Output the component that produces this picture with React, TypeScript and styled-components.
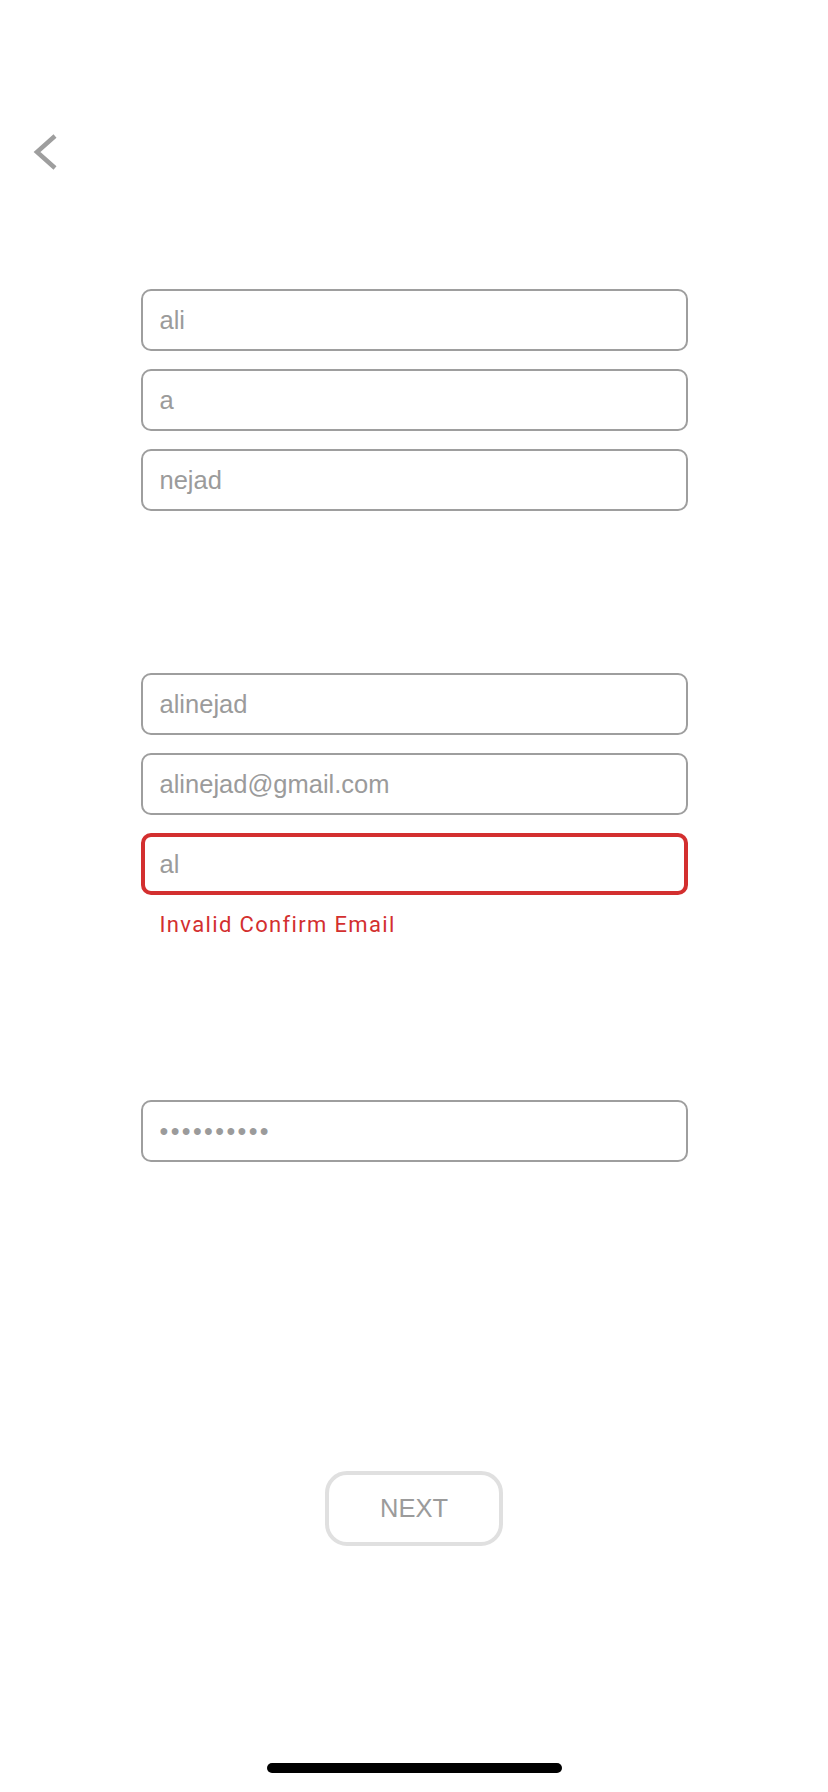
import React from "react";
import styled, { createGlobalStyle } from "styled-components";

const GlobalStyle = createGlobalStyle`
  html, body {
    margin: 0;
    padding: 0;
    background: #ffffff;
  }
  * {
    box-sizing: border-box;
  }
`;

const Gray = "#9e9e9e";
const Red = "#d32f2f";

const Page = styled.div`
  width: 828px;
  height: 1792px;
  overflow: hidden;
  display: flex;
  flex-direction: column;
  background: #ffffff;
  font-family: "Liberation Sans", Arial, sans-serif;
`;

const BackButton = styled.button`
  margin: 134px 0 0 32px;
  padding: 0;
  width: 26px;
  height: 36px;
  border: none;
  background: transparent;
  display: flex;
  align-items: center;
  justify-content: center;
  align-self: flex-start;
`;

const Form = styled.div`
  width: 547px;
  margin: 0 auto;
  display: flex;
  flex-direction: column;
`;

const Group = styled.div<{ $top: number }>`
  margin-top: ${p => p.$top}px;
  display: flex;
  flex-direction: column;
  gap: 18px;
`;

const Field = styled.input<{ $error?: boolean }>`
  width: 100%;
  height: 62px;
  padding: 0;
  border: ${p => (p.$error ? `4px solid ${Red}` : `2px solid ${Gray}`)};
  padding-left: ${p => (p.$error ? "15px" : "17px")};
  border-radius: 10px;
  background: #ffffff;
  color: #9b9b9b;
  font-family: "Liberation Sans", Arial, sans-serif;
  font-size: 25.5px;
  outline: none;
  &[type="password"] {
    letter-spacing: 2.4px;
    font-size: 25px;
  }
`;

const ErrorText = styled.div`
  margin-top: -1px;
  padding-left: 19px;
  font-family: Roboto, "Liberation Sans", sans-serif;
  font-size: 22px;
  line-height: 26px;
  letter-spacing: 1.35px;
  color: ${Red};
`;

const NextButton = styled.button`
  margin: 309px auto 0;
  width: 178px;
  height: 75px;
  border: 4px solid #e0e0e0;
  border-radius: 22px;
  background: #ffffff;
  color: #9b9b9b;
  font-family: "Liberation Sans", Arial, sans-serif;
  font-size: 25.5px;
  padding: 0;
`;

const HomeIndicator = styled.div`
  margin: auto auto 19px;
  width: 295px;
  height: 10px;
  border-radius: 5px;
  background: #000000;
`;

const ChevronLeft = () => (
  <svg width="26" height="36" viewBox="0 0 26 36" fill="none">
    <path d="M23 2 L5 18 L23 34" stroke={Gray} strokeWidth="4.5" />
  </svg>
);

export default function App() {
  return (
    <>
      <GlobalStyle />
      <Page>
        <BackButton aria-label="Back">
          <ChevronLeft />
        </BackButton>
        <Form>
          <Group $top={119}>
            <Field readOnly value="ali" />
            <Field readOnly value="a" />
            <Field readOnly value="nejad" />
          </Group>
          <Group $top={162}>
            <Field readOnly value="alinejad" />
            <Field readOnly value="alinejad@gmail.com" />
            <Field readOnly value="al" $error />
            <ErrorText>Invalid Confirm Email</ErrorText>
          </Group>
          <Group $top={162}>
            <Field readOnly type="password" value="secretpass" />
          </Group>
        </Form>
        <NextButton>NEXT</NextButton>
        <HomeIndicator />
      </Page>
    </>
  );
}
